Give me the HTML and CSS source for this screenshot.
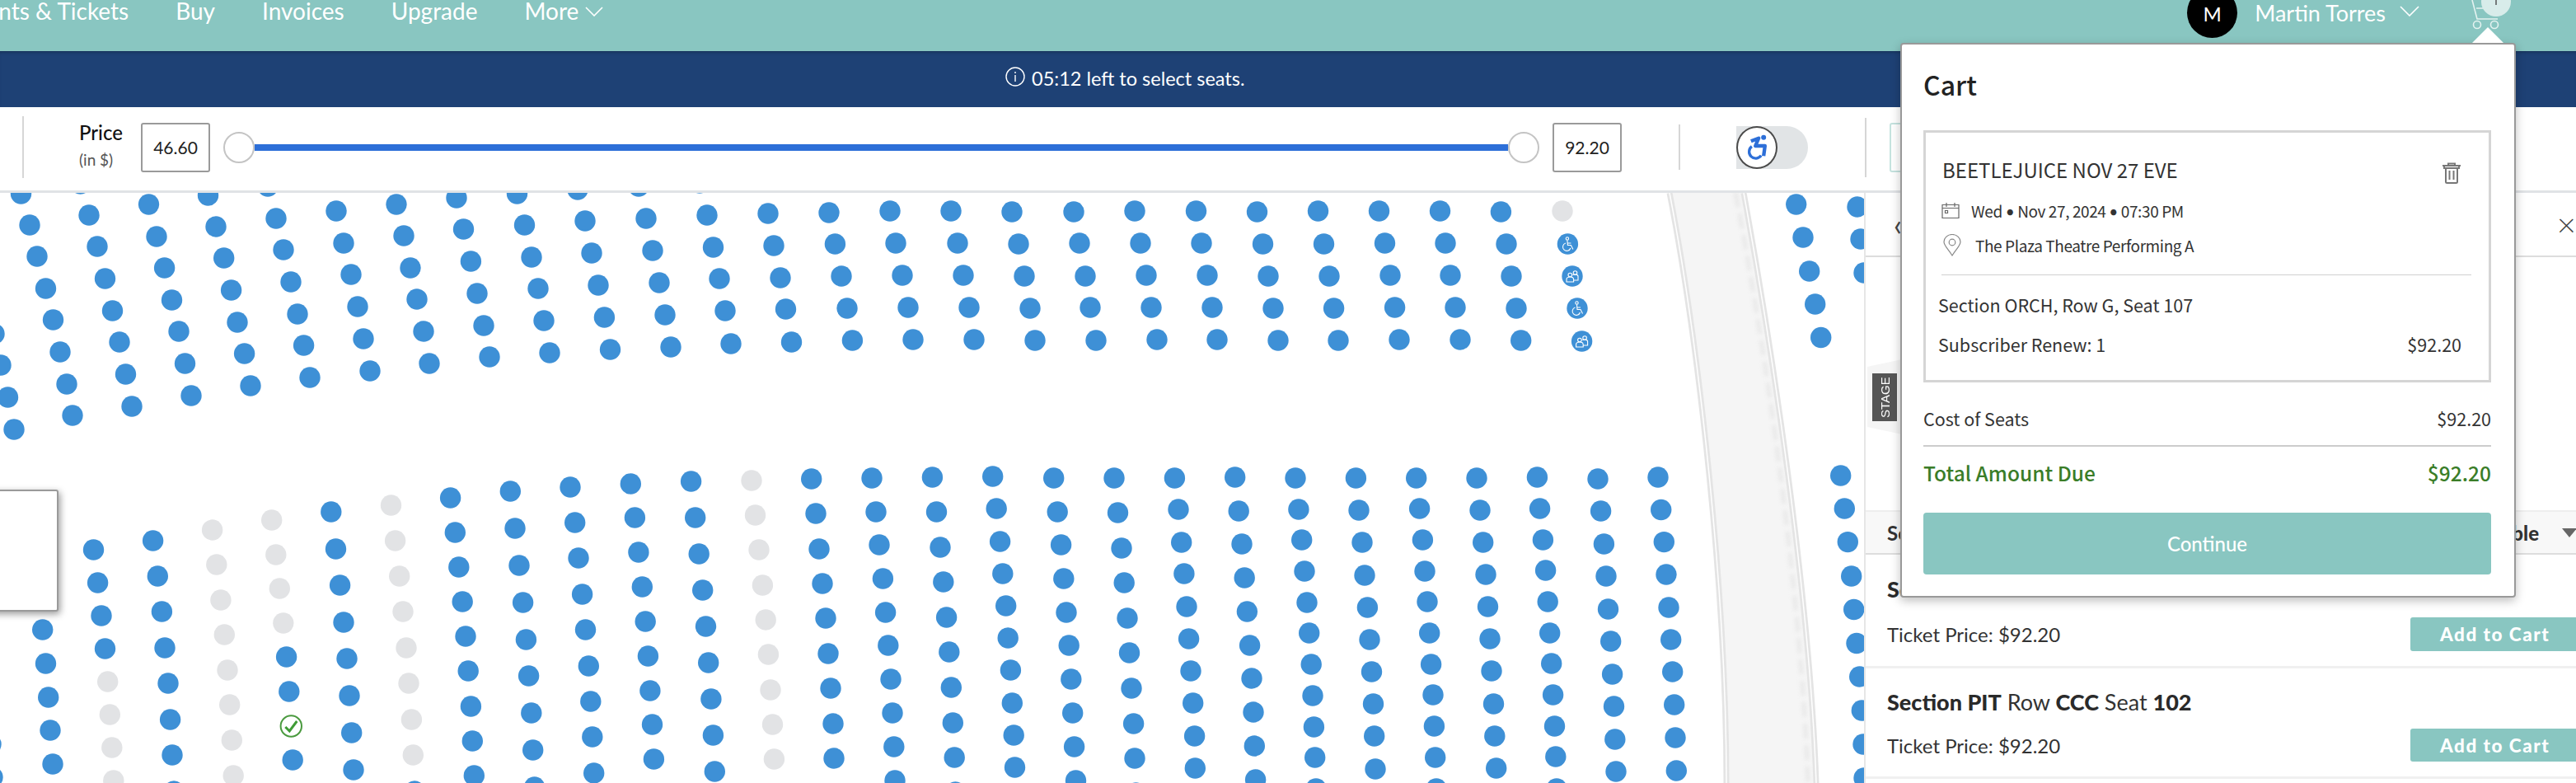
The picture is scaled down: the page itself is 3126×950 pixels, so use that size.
FILE: index.html
```html
<!DOCTYPE html>
<html lang="en">
<head>
<meta charset="utf-8">
<title>Select seats</title>
<link rel="stylesheet" href="styles.css">
</head>
<body>
<div class="page">
  <header class="topbar">
    <nav class="nav">
      <a>Events &amp; Tickets</a><a>Buy</a><a>Invoices</a><a>Upgrade</a>
      <a class="more">More<svg class="chev" viewBox="0 0 22 12"><path d="M1 1l10 10L21 1"/></svg></a>
    </nav>
    <div class="user">
      <span class="avatar">M</span>
      <span class="uname">Martin Torres</span>
      <svg class="chev uchev" viewBox="0 0 24 13"><path d="M1 1l11 11L23 1"/></svg>
      <svg class="carticon" viewBox="0 0 52 36">
        <path d="M1 0l6 23h25M6 10h12" class="cartline"/>
        <circle cx="7" cy="30" r="4.500" class="cartline"/><circle cx="28" cy="30" r="4.500" class="cartline"/>
        <circle cx="30" cy="2" r="18" class="cartbadge"/>
        <path d="M30 0v6" class="cartone"/>
      </svg>
    </div>
  </header>
  <div class="notice">
    <svg class="info" viewBox="0 0 24 24"><circle cx="12" cy="12" r="11"/><path d="M12 10v8M12 6v2"/></svg>
    <span>05:12 left to select seats.</span>
  </div>
  <div class="filters">
    <i class="sep sep-a"></i>
    <div class="price-label"><b>Price</b><small>(in $)</small></div>
    <span class="pricebox">46.60</span>
    <div class="slider"><i class="thumb"></i><i class="track"></i><i class="thumb"></i></div>
    <span class="pricebox">92.20</span>
    <i class="sep sep-b"></i>
    <div class="toggle"><span class="knob"><svg viewBox="80 60 80 105"><circle cx="143" cy="77" r="9"/><path class="isa" d="M97 91L125 80L113 108H148L143 145"/><path class="isa-wheel" d="M100 110A24 24 0 1 0 134 143"/></svg></span></div>
    <i class="sep sep-c"></i>
    <span class="tealbox"></span>
  </div>
  <main class="main">
    <section class="map">
      <svg id="seatmap" class="seats" viewBox="0 234 2262 716">
        <defs>
          <g id="wc"><circle cx="-0.500" cy="-6.500" r="1.700"/><path d="M-0.500 -4.500l.5 6h4l2.500 5M0 -1h4M-2.500 -1a4.800 4.800 0 1 0 6 6"/></g>
          <g id="cp"><circle cx="-2.700" cy="-1.500" r="2.300"/><circle cx="3.500" cy="-4" r="2.300"/><path d="M-7 7v-3q0-3 4.300-3t4.300 3v3zM0.500 -1.500q0-.5 3-.5t3.500 2v5h-5"/></g>
        </defs>
        <path class="aisle" d="M2026 234C2062 420 2095 720 2095 950H2204C2196 720 2150 420 2116 234Z"/>
        <path class="aisle-shade" d="M2106 234C2142 420 2186 720 2194 950"/>
        <path class="aisle-line" d="M2026 234C2062 420 2095 720 2095 950"/>
        <path class="aisle-gap" d="M2026 234C2062 420 2095 720 2095 950"/>
        <path class="aisle-line" d="M2116 234C2150 420 2196 720 2204 950"/>
        <path class="aisle-gap" d="M2116 234C2150 420 2196 720 2204 950"/>
        <g id="dots"></g>
      </svg>
      <div class="tip"></div>
    </section>
    <aside class="panel">
      <div class="panel-head"><span class="back">‹</span><span class="close">×</span></div>
      <div class="panel-map"><div class="stagewrap"><span class="stage">STAGE</span></div></div>
      <div class="sortrow"><span>Sort By</span><span class="sortr"><b>Price: Available</b><i class="tri"></i></span></div>
      <div class="ticket">
        <div class="t-title"><b>Section PIT</b> Row <b>CCC</b> Seat <b>101</b></div>
        <div class="t-line"><span>Ticket Price: $92.20</span><button class="addbtn">Add to Cart</button></div>
      </div>
      <div class="ticket">
        <div class="t-title"><b>Section PIT</b> Row <b>CCC</b> Seat <b>102</b></div>
        <div class="t-line"><span>Ticket Price: $92.20</span><button class="addbtn">Add to Cart</button></div>
      </div>
    </aside>
  </main>
  <div class="cart">
    <h2 class="cart-title">Cart</h2>
    <div class="cart-box">
      <div class="event">
        <span>BEETLEJUICE NOV 27 EVE</span>
        <svg class="trash" viewBox="0 0 24 28"><path d="M1 6h22M8 6V3.500h8V6M3 6v3h18V6M5 9v16.500q0 1.500 1.500 1.500h11q1.500 0 1.500-1.500V9M9.500 12v11M14.500 12v11"/></svg>
      </div>
      <div class="meta">
        <svg class="cal" viewBox="0 0 22 20"><path d="M1 3.500h20v16H1zM1 7.500h20M6 1v5M16 1v5M4.500 10.500h3v3h-3z"/></svg>
        <span>Wed <span class="dot">•</span> Nov 27, 2024 <span class="dot">•</span> 07:30 PM</span>
      </div>
      <div class="meta meta-loc">
        <svg class="pin" viewBox="0 0 22 27"><path d="M11 26C6 18 1 14 1 9.500a10 9 0 0 1 20 0C21 14 16 18 11 26z"/><circle cx="11" cy="10" r="3.800"/></svg>
        <span>The Plaza Theatre Performing A</span>
      </div>
      <hr class="rule">
      <div class="seatline">Section ORCH, Row G, Seat 107</div>
      <div class="seatline split"><span>Subscriber Renew: 1</span><span>$92.20</span></div>
    </div>
    <div class="cost"><span>Cost of Seats</span><span>$92.20</span></div>
    <hr class="rule2">
    <div class="total"><span>Total Amount Due</span><span>$92.20</span></div>
    <button class="continue">Continue</button>
  </div>
</div>
<script src="seats.js"></script>
</body>
</html>
```
FILE: styles.css
```css
* { box-sizing: border-box; }
html, body { margin: 0; padding: 0; background: #fff; }
.page { position: relative; width: 3126px; height: 950px; overflow: hidden; font-family: Lato, "Open Sans", sans-serif; color: #2b2b2b; }

.topbar { display: flex; height: 62px; background: #89c6c1; color: #fff; overflow: hidden; position: relative; }
.nav { display: flex; gap: 57px; margin-left: -46px; font-size: 28px; line-height: 26px; height: 26px; }
.nav a { display: flex; white-space: nowrap; }
.more { gap: 8px; }
.chev { fill: none; stroke: #fff; stroke-width: 1.6; }
.more .chev { width: 22px; height: 12px; margin-top: 8px; }
.user { display: flex; margin-left: auto; }
.avatar { width: 61px; height: 61px; margin-top: -15px; border-radius: 50%; background: #000; color: #fff; display: flex; align-items: center; justify-content: center; font-size: 24px; padding-top: 1px; }
.uname { margin-left: 21px; font-size: 27px; line-height: 32px; white-space: nowrap; }
.uchev { width: 24px; height: 13px; margin: 7px 0 0 17px; }
.carticon { width: 52px; height: 36px; margin: 0 75px 0 63px; }
.cartline { fill: none; stroke: #e4f2f0; stroke-width: 1.6; }
.cartbadge { fill: #d8ecea; }
.cartone { stroke: #555; stroke-width: 1.5; }

.notice { height: 68px; background: #1e4175; color: #fff; display: flex; align-items: center; padding: 0 0 2px 1220px; gap: 8px; font-size: 23.500px; box-shadow: inset 0 4px 4px -3px rgba(0,0,0,.3); }
.info { width: 24px; height: 24px; fill: none; stroke: #fff; stroke-width: 1.4; margin-top: -5px; }

.filters { display: flex; align-items: center; height: 104px; padding-bottom: 4px; border-bottom: 3px solid #e0e3e6; background: #fff; }
.sep { display: block; width: 2px; background: #d6d6d6; flex: none; }
.sep-a { height: 75px; margin-left: 27px; }
.sep-b { height: 55px; margin-left: 69px; }
.sep-c { height: 72px; margin-left: 69px; }
.price-label { display: flex; flex-direction: column; margin-left: 67px; width: 75px; gap: 7px; margin-top: -4px; }
.price-label b { font-size: 24px; line-height: 28px; font-weight: 500; color: #111; }
.price-label small { font-size: 19px; line-height: 24px; color: #555; }
.pricebox { width: 84px; height: 60px; border: 2px solid #9a9a9a; border-radius: 3px; display: flex; align-items: center; justify-content: center; font-size: 21px; color: #222; flex: none; }
.slider { display: flex; align-items: center; margin: 0 16px; flex: none; width: 1597px; }
.thumb { width: 38px; height: 38px; border: 2px solid #c4c4c4; border-radius: 50%; background: #fff; flex: none; }
.track { height: 8px; background: #2d6fd8; flex: 1; }
.toggle { width: 87px; height: 52px; margin-left: 68px; border-radius: 0 26px 26px 0; background: #e1e4e6; position: relative; flex: none; }
.knob { position: absolute; left: 0; top: 0; width: 50px; height: 52px; border-radius: 50%; background: #fff; border: 2px solid #4a4a4a; display: flex; align-items: center; justify-content: center; }
.knob svg { width: 27px; height: 35px; fill: #2d6fd8; }
.isa { fill: none; stroke: #2d6fd8; stroke-width: 13; stroke-linejoin: round; }
.isa-wheel { fill: none; stroke: #2d6fd8; stroke-width: 10; }
.tealbox { width: 200px; height: 60px; margin-left: 28px; border: 2px solid #c5e3df; border-radius: 3px; flex: none; }

.main { display: flex; height: 716px; }
.map { position: relative; width: 2262px; flex: none; overflow: hidden; }
.seats { display: block; width: 2262px; height: 716px; }
.seat { fill: #3e90d6; }
.seat-off { fill: #e2e3e5; }
.glyph { fill: none; stroke: #fff; stroke-width: 1.100; }
.seat-on { fill: #fff; stroke: #4a9a3f; stroke-width: 2; }
.seat-check { fill: none; stroke: #3f9b36; stroke-width: 3; }
.aisle { fill: #f5f5f5; }
.aisle-shade { fill: none; stroke: #e9e9e9; stroke-width: 5; stroke-dasharray: 18 8; filter: blur(2px); }
.aisle-line { fill: none; stroke: #e4e4e4; stroke-width: 7; }
.aisle-gap { fill: none; stroke: #fff; stroke-width: 1.500; }
.tip { position: absolute; left: -20px; top: 360px; width: 91px; height: 148px; background: #fff; border: 2px solid #9a9a9a; border-radius: 3px; box-shadow: 2px 3px 8px rgba(0,0,0,.4); }

.panel { width: 864px; flex: none; display: flex; flex-direction: column; border-left: 2px solid #e6e6e6; background: #fff; }
.panel-head { height: 78px; display: flex; justify-content: space-between; align-items: center; padding: 0 0 0 34px; border-bottom: 2px solid #ddd; color: #444; font-size: 36px; }
.close { font-size: 40px; font-weight: 300; }
.panel-map { height: 307px; padding-top: 124px; }
.stagewrap { width: 42px; height: 91px; background: #f5f5f5; clip-path: polygon(0 10%, 100% 0, 100% 100%, 0 90%); display: flex; align-items: center; margin-left: 2px; border-right: 2px solid #9db9e6; }
.stage { width: 30px; height: 58px; margin-left: 6px; background: #555; color: #fff; font: 15px "Liberation Sans", sans-serif; writing-mode: vertical-rl; transform: rotate(180deg); display: flex; align-items: center; justify-content: center; }
.sortrow { height: 54px; display: flex; justify-content: space-between; align-items: center; padding-left: 26px; background: #f8f8f8; border-top: 2px solid #eee; border-bottom: 2px solid #ddd; font-size: 24px; font-weight: 700; color: #333; }
.sortr { display: flex; align-items: center; gap: 28px; }
.tri { width: 0; height: 0; border: 9px solid transparent; border-top: 11px solid #666; border-bottom: 0; margin-right: -1px; }
.ticket { height: 138px; padding: 27px 0 0 26px; border-bottom: 3px solid #f0f0f0; }
.ticket + .ticket { height: 134px; padding-top: 26px; }
.t-title { font-size: 27px; line-height: 30px; color: #333; }
.t-title b { font-weight: 900; color: #2a2a2a; }
.t-line { display: flex; justify-content: space-between; align-items: center; margin-top: 19px; font-size: 24px; color: #333; }
.ticket + .ticket .t-line { margin-top: 17px; }
.addbtn { width: 201px; height: 41px; border: 0; border-radius: 3px 0 0 3px; background: #89c6c1; color: #fff; font: 900 22.500px Lato, sans-serif; letter-spacing: 1.500px; text-align: left; padding-left: 36px; }
.ticket + .ticket .addbtn { height: 40px; }

.cart { position: absolute; left: 2306px; top: 52px; width: 747px; height: 673px; background: #fff; border: 2px solid #999; border-radius: 4px; padding: 0 28px 0 26px; box-shadow: 0 4px 12px rgba(0,0,0,.25); font-family: "Noto Sans CJK SC", "Noto Sans CJK JP", sans-serif; color: #333; }
.cart::before { content: ""; position: absolute; left: 692px; top: -21px; border: 19px solid transparent; border-top: 0; border-bottom: 19px solid #fff; }
.cart-title { margin: 28px 0 0; font-size: 32px; line-height: 40px; font-weight: 500; color: #222; }
.cart-box { margin-top: 36px; height: 306px; border: 3px solid #d5d5d5; padding: 30px 21px 0 15px; }
.event { display: flex; justify-content: space-between; align-items: flex-start; height: 30px; padding-left: 5px; font-size: 24px; line-height: 30px; }
.trash { width: 24px; height: 28px; margin: 4px 12px 0 0; fill: none; stroke: #777; stroke-width: 2; }
.meta { display: flex; align-items: center; gap: 14px; height: 26px; margin-top: 21px; padding-left: 4px; font-size: 19px; letter-spacing: -.4px; }
.dot { font-family: Lato, sans-serif; }
.meta-loc { margin-top: 16px; gap: 17px; padding-left: 6px; }
.cal { width: 22px; height: 20px; fill: none; stroke: #666; stroke-width: 1.200; }
.pin { width: 22px; height: 27px; fill: none; stroke: #888; stroke-width: 1.200; }
.rule { border: 0; border-top: 1px solid #d0d0d0; margin: 23px 0 0 4px; }
.seatline { height: 30px; margin-top: 21px; font-size: 21.500px; line-height: 30px; }
.split { display: flex; justify-content: space-between; margin-top: 18px; padding-right: 12px; }
.cost { display: flex; justify-content: space-between; margin-top: 30px; height: 28px; line-height: 28px; font-size: 21.500px; }
.rule2 { border: 0; border-top: 2px solid #ccc; margin: 18px 0 0; }
.total { display: flex; justify-content: space-between; margin-top: 15px; height: 34px; line-height: 34px; font-size: 24.500px; font-weight: 500; color: #3a7d28; }
.continue { display: block; width: 100%; height: 75px; margin-top: 31px; border: 0; border-radius: 4px; background: #89c6c1; color: #fff; font: 500 24px Lato, sans-serif; }
```
FILE: seats.js
```js
// Seat map data: each list is one aisle-to-aisle column, flat x,y pairs.
var upper = [
[-7,405,1,443,9.5,482,17,521],
[25.5,235,36,273,45,311,55.5,350,64.5,388,73,427,81,466,88,504],
[97.5,223,108,261,118,299,127.5,338,136.5,377,145,415,152.5,454,160,493],
[180.5,248,190,287,199.6,325,208.5,364,217,402,224.5,441,232,480],
[252.5,237,262,275,271.7,313,280.6,352,288,391,296.6,429,304,468],
[325,226,335,265,344,303,353,342,361,381,368.6,419,376,458],
[408,256,417,295,426,333,434,372,441,411,449,450],
[481,248,490,286,498,325,506,363,514,402,521,441],
[554,240,562.5,278,571.4,317,579,356,587,395,594,433],
[627.5,235,636.5,273,645,312,653,350,660,389,667,428],
[701,230,710,268,718,307,726,346,733.4,385,740.5,424],
[775,226,784,265,792,304,800,343,807,382,814,421],
[849,222,858,261,865.5,300,873,338,880,377,887,417],
[932,259,939,298,947,337,953.5,375,960.5,415],
[1006,258,1013.4,296,1021,335,1028,374,1034.4,413],
[1080,256,1087,295,1095,334,1102,373,1108,412],
[1154,256,1162,295,1169,334,1176,373,1182,412],
[1228,257,1236,296,1243,335,1250,374,1256,413],
[1303,257,1310,295,1317,335,1323,373,1330,413],
[1377,256,1384,295,1391,334,1397,373,1404,412],
[1451.5,256,1458,295,1465,334,1471,373,1477,412],
[1525.5,257,1532.5,296,1539,335,1545,374,1551,413],
[1599.5,256,1606.5,296,1613,335,1618.6,374,1624,413],
[1673.5,256,1680.5,295,1687,334,1692.6,373,1698,412],
[1747.5,256,1754,295,1760,334,1766,373,1772,412],
[1821.4,257,1828,296,1834,335,1840,374,1845.7,413],
[2179.7,248,2188,288,2195.7,329,2202.7,369,2209.7,409.5],
[2254,251,2258,290,2262,331]
];
var lower = [
[-11,903,-9,943],
[51.7,764,55.5,805,58.7,846,61,886,64,927],
[113.5,667,118.6,707,123,747,127.5,787,130.7,827,133.3,867,135.8,907,137.8,947],
[185.6,656,191.3,699,196.4,742,200,786,204,829,206.6,873,209,916,211,960],
[257.6,643,262.8,685,267.9,728,272.3,770,276,813,278.7,855,281.3,898,283.2,941],
[329.7,631,334.8,673,339.3,714,343.8,756,347.6,797,350.8,839,353.3,881,355.2,922],
[401.8,621,407.5,666,412.6,710,417,755,421,799,424,844,426.7,889,429,934],
[474.5,613,479.6,656,484.7,699,489,742,493,786,496,829,499.4,873,501.3,916,503,960],
[546.6,604,552.3,646,556.8,688,561.2,730,565,772,568.2,814,571.4,857,573.3,899,575.3,941],
[619.3,596,625,641,630,686,634.6,731,638.4,776,641.6,820,644.8,865,646.7,910,648.6,955],
[692,591,697.7,634,702,677,706.6,721,710.5,764,714.3,808,716.8,851,718.8,894,720.7,938],
[765.3,587,770.4,628,774.9,670,779.3,712,783.2,754,786.4,796,788.9,838,791.5,879,793.4,921],
[838.6,584,843.7,628,848.2,672,852.7,716,856.5,760,859.7,804,862.9,848,865.4,892,867.3,936],
[912,583,916.5,625,921,667,925.4,710,929.2,752,932.4,794,935,837,937.5,879,939.4,921],
[984.7,581,990,623,994,666,998,708,1002,750,1005,793,1008,835,1011,878,1012,920],
[1058,580,1063,621,1067,661,1071.4,702,1074.6,743,1077.8,783,1081,824,1083,865,1084.8,906,1086,947],
[1131.4,579,1136.5,621,1141,664,1144.8,706,1148.6,749,1151.8,791,1154.3,834,1156.3,877,1158.2,919,1159.4,961],
[1204.7,578,1209.2,617,1213.6,657,1216.8,696,1220.7,735,1223.2,774,1226.4,813,1228.3,853,1230.2,892,1231.5,931],
[1278.7,580,1283.2,621,1287.6,661,1290.8,702,1294,743,1297.2,783,1299.8,824,1301.7,865,1303.6,906,1305.5,947],
[1352,580,1356.5,622,1361,665,1364.2,707,1368,750,1370.5,792,1373,835,1375.6,878,1377,920,1378.5,962],
[1425.4,580,1430,618,1433.7,658,1436.9,696,1440,736,1442.6,775,1445,814,1447.7,853,1449.6,893,1450.3,932],
[1498.7,579,1503.2,620,1507,660,1510.2,701,1513.4,742,1516.6,783,1519,823,1521,864,1522.3,905,1523.6,946],
[1572,580,1575.9,618,1579.7,655,1583,693,1586,731,1588.7,768,1591.2,806,1593,844,1594.4,882,1595.7,919,1597,957],
[1645.4,580,1649,619,1653,658,1656,698,1659.4,737,1662,776,1664.5,815,1666.5,854,1667.7,893,1669,933],
[1718.7,580,1722.6,617,1726.4,655,1729,693,1732,730,1734.7,768,1736.6,806,1739,843,1740.4,881,1741.7,919,1743,957],
[1792,580,1796,619,1799.7,658,1803,697,1805.5,736,1808,775,1810,814,1812.5,854,1813.8,893,1815.7,932],
[1865.4,579,1868.6,617,1872.4,655,1875.6,692,1878.2,730,1880.7,768,1882.7,805,1884.6,843,1886.5,881,1887.8,918,1889,957],
[1939,581,1942.6,620,1946.4,660,1949,699,1951.5,739,1954.7,778,1956.6,818,1958.5,857,1959.8,897,1961,936],
[2012,579,2015.7,618.5,2019.3,657.6,2022,697,2025,737,2027.7,776,2029.7,815,2031.7,855,2033,895,2034.3,935],
[2233.7,577,2238.3,617,2242.3,657.6,2246.7,699,2249.7,739.5,2253,780.5,2256.7,821,2259.3,862,2261,903,2262,944]
];
// Seats that are not on sale: lower-block column -> rows (all rows if true).
var unavailable = { 2: [4,5,6,7], 4: true, 5: [0,1,2,3], 7: [0,1,2,3,4,5,6,7], 13: true };
// Last upper column: one unavailable seat, then accessible and companion seats.
var edge = [[1896,256,"off"],[1902.4,296,"wc"],[1908,335,"cp"],[1914,374,"wc"],[1919.6,414,"cp"]];

var NS = "http://www.w3.org/2000/svg";
var host = document.getElementById("dots");
function el(name, attrs, parent) {
  var n = document.createElementNS(NS, name);
  for (var k in attrs) n.setAttribute(k, attrs[k]);
  (parent || host).appendChild(n);
  return n;
}
function seat(x, y, cls) { el("circle", { cx: x, cy: y, r: 12.7, "class": cls }); }
upper.forEach(function (c) {
  for (var i = 0; i < c.length; i += 2) seat(c[i], c[i + 1], "seat");
});
lower.forEach(function (c, ci) {
  var off = unavailable[ci];
  for (var i = 0; i < c.length; i += 2) {
    var row = i / 2;
    var isOff = off === true || (off && off.indexOf(row) >= 0);
    if (ci === 5 && row === 6) {
      seat(c[i], c[i + 1], "seat-on");
      el("path", { d: "M" + (c[i] - 7) + " " + (c[i + 1] + 1) + "l5 5l9-12", "class": "seat-check" });
    } else {
      seat(c[i], c[i + 1], isOff ? "seat-off" : "seat");
    }
  }
});
edge.forEach(function (s) {
  seat(s[0], s[1], s[2] === "off" ? "seat-off" : "seat");
  if (s[2] !== "off") {
    el("use", { href: "#" + s[2], x: s[0], y: s[1], "class": "glyph" });
  }
});
```
